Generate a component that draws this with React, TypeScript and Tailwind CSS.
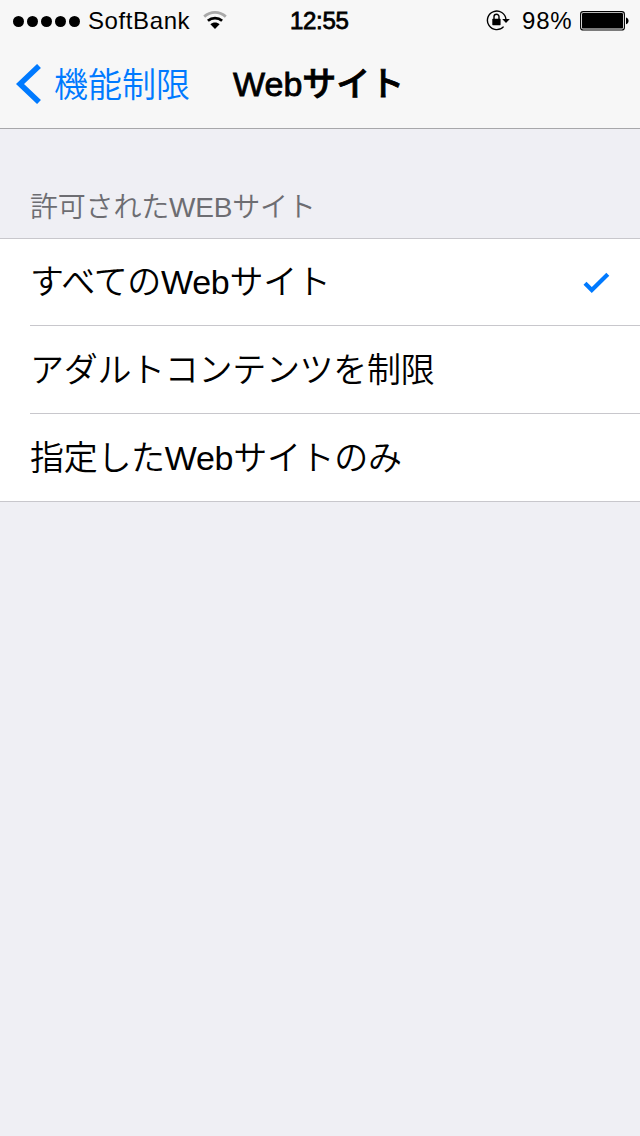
type Option = {
  label: string;
  selected?: boolean;
};

const options: Option[] = [
  { label: 'すべてのWebサイト', selected: true },
  { label: 'アダルトコンテンツを制限' },
  { label: '指定したWebサイトのみ' },
];

const SignalDots = () => (
  <div className="flex gap-[3px]">
    {[0, 1, 2, 3, 4].map((dot) => (
      <span key={dot} className="size-[11px] rounded-full bg-black" />
    ))}
  </div>
);

const WifiIcon = () => (
  <svg width="26" height="20" viewBox="0 0 26 20" fill="none">
    <path d="M2.2 5.6C8.5 0 17.5 0 23.8 5.6" stroke="#a9a9a9" strokeWidth="2.8" />
    <path d="M5.9 9.7C10 6.2 16 6.2 20.1 9.7" stroke="#000" strokeWidth="2.8" />
    <path d="M13 18L8.4 13.3C10.9 10.8 15.1 10.8 17.6 13.3Z" fill="#000" />
  </svg>
);

const RotationLockIcon = () => (
  <svg width="24" height="22" viewBox="0 0 24 22" fill="none">
    <path d="M17.6 16.6A9.3 9.3 0 1 1 20 9.5" stroke="#000" strokeWidth="1.4" />
    <path d="M16.2 9H23.8L20 13Z" fill="#000" />
    <rect x="6.3" y="8.8" width="8.3" height="6.4" rx="0.6" fill="#000" />
    <path d="M8 9.2V6.8a2.5 2.5 0 0 1 5 0V9.2" stroke="#000" strokeWidth="1.4" />
  </svg>
);

const BatteryIcon = () => (
  <svg width="50" height="20" viewBox="0 0 50 20" fill="none">
    <rect x="0.6" y="0.6" width="43.8" height="18.4" rx="2.6" stroke="#000" strokeWidth="1.1" />
    <rect x="2" y="2" width="41" height="15.6" rx="1.2" fill="#000" />
    <path d="M46 6.4C49.4 7.2 49.4 12.4 46 13.2Z" fill="#000" />
  </svg>
);

const StatusBar = () => (
  <div className="grid h-10 grid-cols-[290px_1fr_154px] items-center pt-px text-2xl leading-10">
    <div className="flex items-center pl-[13px]">
      <SignalDots />
      <span className="ml-2 tracking-[0.6px]">SoftBank</span>
      <span className="ml-3">
        <WifiIcon />
      </span>
    </div>
    <span className="tracking-[-0.3px] [-webkit-text-stroke:0.8px_#000]">12:55</span>
    <div className="flex items-center">
      <RotationLockIcon />
      <span className="ml-3 w-[58px] tracking-[0.8px]">98%</span>
      <BatteryIcon />
    </div>
  </div>
);

const NavBar = () => (
  <div className="flex h-22 items-center pl-4 text-[34px] leading-none">
    <button className="flex items-center font-[350] text-[#007aff]">
      <svg width="25" height="40" viewBox="0 0 25 40" fill="none">
        <path d="M23 2L4 20L23 38" stroke="currentColor" strokeWidth="5.6" />
      </svg>
      <span className="ml-[13px] pt-px">機能制限</span>
    </button>
    <h1 className="ml-[43px] font-medium [-webkit-text-stroke:0.8px_#000]">Webサイト</h1>
  </div>
);

const CheckIcon = () => (
  <svg width="28" height="22" viewBox="0 0 28 22" fill="none" className="mt-0.5">
    <path d="M3 11.2L9.8 18L25.8 2.2" stroke="#007aff" strokeWidth="4.2" />
  </svg>
);

const OptionList = () => (
  <ul className="border-y border-[#c8c7cc] bg-white pl-[30px]">
    {options.map(({ label, selected }) => (
      <li
        key={label}
        className="flex h-22 items-center justify-between border-b border-[#c8c7cc] pr-[30px] text-[34px] leading-none font-[350] tracking-[-0.3px] first:h-[87px] last:h-[87px] last:border-b-0"
      >
        <span>{label}</span>
        {selected && <CheckIcon />}
      </li>
    ))}
  </ul>
);

export default function App() {
  return (
    <div className="min-h-[1136px] w-[640px] bg-[#efeff4] font-['Liberation_Sans','Noto_Sans_CJK_JP',sans-serif] text-black">
      <header className="border-b border-[#a7a7aa] bg-[#f7f7f7]">
        <StatusBar />
        <NavBar />
      </header>
      <main>
        <h2 className="flex h-[109px] items-end pb-4 pl-[30px] text-[28px] leading-none font-[350] tracking-[-0.2px] text-[#6d6d72]">
          許可されたWEBサイト
        </h2>
        <OptionList />
      </main>
    </div>
  );
}
